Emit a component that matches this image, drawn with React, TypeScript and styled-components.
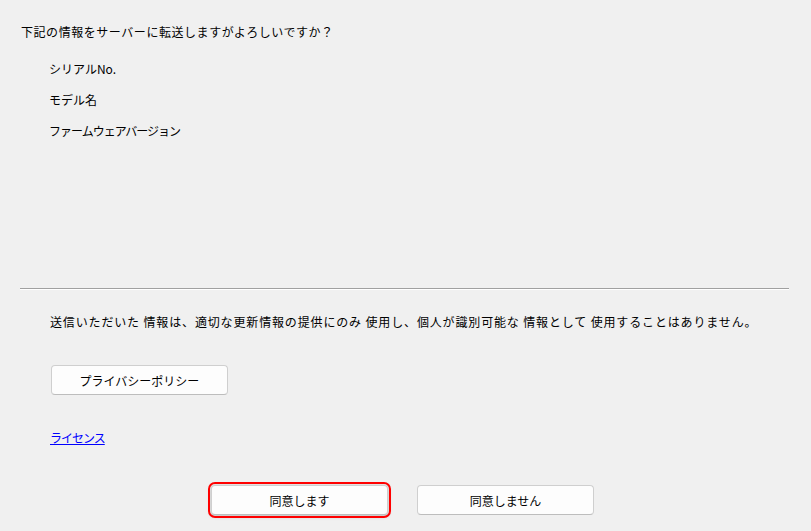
import styled, { createGlobalStyle } from "styled-components";

const GlobalStyle = createGlobalStyle`
  html, body {
    margin: 0;
    padding: 0;
    background: #f0f0f0;
  }
`;

const Window = styled.div`
  width: 811px;
  height: 531px;
  box-sizing: border-box;
  background: #f0f0f0;
  padding: 24px 22px 0 20px;
  font-family: "Noto Sans CJK JP", "Noto Sans", sans-serif;
  font-size: 12px;
  color: #000;
  display: flex;
  flex-direction: column;
`;

const Question = styled.p`
  margin: 0 0 0 1px;
  line-height: 16px;
  letter-spacing: 0.55px;
`;

const InfoList = styled.ul`
  list-style: none;
  margin: 21px 0 0 0;
  padding: 0 0 0 29px;
  display: flex;
  flex-direction: column;
  gap: 15px;
`;

const InfoItem = styled.li<{ $tight?: boolean }>`
  line-height: 16px;
  letter-spacing: ${(p) => (p.$tight ? "-1px" : "0")};
`;

const Separator = styled.hr`
  margin: 149px 0 0 0;
  border: none;
  border-top: 1px solid #a0a0a0;
  border-bottom: 1px solid #ffffff;
  height: 0;
`;

const Section = styled.div`
  padding-left: 30px;
  display: flex;
  flex-direction: column;
  align-items: flex-start;
`;

const Notice = styled.p`
  margin: 24px 0 0 0;
  line-height: 16px;
  letter-spacing: 0.85px;
  white-space: nowrap;
`;

const Button = styled.button<{ $focused?: boolean }>`
  width: 177px;
  height: 30px;
  box-sizing: border-box;
  background: #fdfdfd;
  border: 1px solid #cfcfcf;
  border-bottom-color: #bdbdbd;
  border-radius: 4px;
  font-family: inherit;
  font-size: 12px;
  color: #000;
  padding: 0;
  cursor: pointer;
  outline: ${(p) => (p.$focused ? "2px solid #ff0000" : "none")};
  outline-offset: 1px;
  box-shadow: ${(p) => (p.$focused ? "0 1px 4px rgba(0,0,0,0.25)" : "none")};
`;

const PolicyButton = styled(Button)`
  margin: 35px 0 0 1px;
`;

const LicenseLink = styled.a`
  margin-top: 35px;
  line-height: 16px;
  letter-spacing: -1px;
  color: #0000ff;
  text-decoration: underline;
  cursor: pointer;
`;

const ButtonRow = styled.div`
  margin-top: 39px;
  display: flex;
  justify-content: center;
  gap: 29px;
  padding-right: 4px;
`;

const App = () => {
  return (
    <>
      <GlobalStyle />
      <Window>
        <Question>下記の情報をサーバーに転送しますがよろしいですか？</Question>
        <InfoList>
          <InfoItem>シリアルNo.</InfoItem>
          <InfoItem>モデル名</InfoItem>
          <InfoItem $tight>ファームウェアバージョン</InfoItem>
        </InfoList>
        <Separator />
        <Section>
          <Notice>
            送信いただいた 情報は、適切な更新情報の提供にのみ 使用し、個人が識別可能な 情報として 使用することはありません。
          </Notice>
          <PolicyButton>プライバシーポリシー</PolicyButton>
          <LicenseLink>ライセンス</LicenseLink>
        </Section>
        <ButtonRow>
          <Button $focused>同意します</Button>
          <Button>同意しません</Button>
        </ButtonRow>
      </Window>
    </>
  );
};

export default App;
